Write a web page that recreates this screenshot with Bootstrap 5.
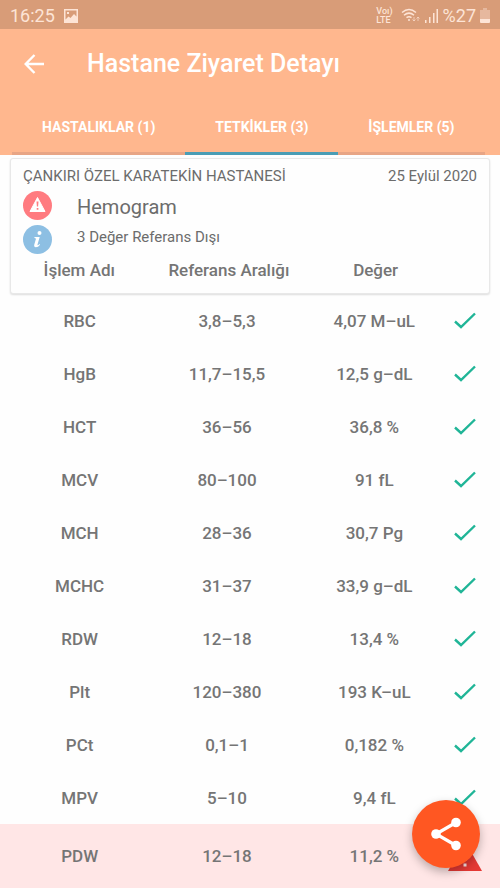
<!DOCTYPE html>
<html lang="tr">
<head>
<meta charset="utf-8">
<meta name="viewport" content="width=device-width, initial-scale=1">
<title>Hastane Ziyaret Detayı</title>
<link href="https://cdn.jsdelivr.net/npm/bootstrap@5.3.0/dist/css/bootstrap.min.css" rel="stylesheet">
<style>
body{font-family:Roboto,"Liberation Sans",sans-serif;font-weight:500;color:#757575;background:#fefefe}
svg{display:block;flex:none}
.status{height:29px;background:#d89c78;color:#fde4d6;font-size:18px;line-height:29px;font-weight:400;padding:2px 10px 0 10px}
.volte{font-size:9px;line-height:9px;font-weight:500}
.appbar{background:#ffb78e;color:#fff}
.titlebar{height:68px;padding:2px 0 0 20px}
.titlebar h1{font-size:25px;line-height:32px;font-weight:500;margin-left:39px}
.back{width:28px;height:28px;color:#fff}
.tabline{padding:0 12px}
.tabline .nav{height:58px}
.tabline .nav-link{font-size:14px;line-height:20px;padding:20px 30px 15px;color:#fff;font-weight:700;border-radius:0;border-bottom:3px solid #e8a585}
.tabline .nav-link.active{border-color:#4a9db5}
.visit{margin:3px 10px 0;border:1px solid #e8e8e8;border-radius:3px;box-shadow:0 1px 2px #0002;background:#fefefe;color:inherit}
.place{font-size:15px;line-height:18px;font-weight:400;padding:8px 12px 0}
.summary{padding:6px 12px 0}
.summary-line{height:34px}
.summary-line svg{margin-right:25px}
.summary h2{font-size:20px;line-height:32px;font-weight:400}
.summary p{font-size:15px;line-height:24px;font-weight:400}
.place,.summary h2,.summary p{color:#6c6c6c}
.results{table-layout:fixed;width:100%;font-size:17px;line-height:22px;text-align:center}
.results th,.results td{font-weight:500;padding:0}
.head-wrap{padding:0 40px 12px 0}
.head-wrap th:first-child{width:33%;padding-right:8px}
.body-wrap td,.body-wrap th{height:53px}
.body-wrap .edge{width:6px}
.body-wrap .mark-col{width:34px}
.body-wrap .end{width:18px}
.body-wrap .alert-row>*{height:64px;background:#ffe6e6}
.body-wrap svg{margin:auto}
.share{width:68px;height:68px;right:20px;bottom:20px;background:#ff5722;color:#fff;box-shadow:0 4px 10px #0004}
.share:hover{background:#f04a18;color:#fff}
</style>
<script src="https://cdn.jsdelivr.net/npm/bootstrap@5.3.0/dist/js/bootstrap.bundle.min.js"></script>
</head>
<body>
<svg class="d-none" aria-hidden="true">
<symbol id="tick" viewBox="0 0 22 18"><path d="M1 9.500 7 15 21 1.500" fill="none" stroke="#20b597" stroke-width="2.400"/></symbol>
</svg>
<div class="status d-flex align-items-center">
  <span>16:25</span>
  <svg class="ms-2" width="16" height="14" viewBox="0 0 16 14"><path fill="currentColor" fill-rule="evenodd" d="M1 0h14v14H1zM2.500 1.500v9l3-3 2 1.500 3.500-4 2.500 2.500v-6zM4 3h2v2H4z"/></svg>
  <span class="volte ms-auto">Voı)<br>LTE</span>
  <svg class="ms-2" width="20" height="15" viewBox="0 0 20 15" fill="none" stroke="currentColor" stroke-width="1.500"><path d="M1 4.500q7-6 14 0M3 7.200q5-4.200 10 0M5.500 9.700q2.500-2 5 0"/><circle cx="8" cy="12" r="1" fill="currentColor" stroke="none"/><path stroke-width="1" opacity=".65" d="M13 9v4m-1.500-1.500L13 13l1.500-1.500M17 13V9m-1.500 1.500L17 9l1.500 1.500"/></svg>
  <svg class="ms-1" width="14" height="14" viewBox="0 0 14 14"><path fill="currentColor" d="M0 11h1.500v3H0zM4 8h1.500v6H4zM8 4h1.500v10H8zM11.500 0H13v14h-1.500z"/></svg>
  <span class="ms-1">%27</span>
  <svg class="ms-1" width="10" height="15" viewBox="0 0 10 15"><path fill="currentColor" opacity=".4" d="M3 0h4v2h3v9H0V2h3z"/><path fill="currentColor" d="M0 11h10v3q0 1-1 1H1q-1 0-1-1z"/></svg>
</div>
<header class="appbar">
  <div class="titlebar d-flex align-items-center">
    <button type="button" class="back btn p-0 border-0 d-flex align-items-center justify-content-center" aria-label="Geri"><svg width="20" height="20" viewBox="0 0 20 20" fill="none" stroke="currentColor" stroke-width="2.400"><path d="M20 10H2M10.500 1 1.700 10l8.800 9"/></svg></button>
    <h1 class="mb-0">Hastane Ziyaret Detayı</h1>
  </div>
  <div class="tabline">
    <nav class="nav flex-nowrap text-nowrap">
      <a class="nav-link" href="#hastaliklar">HASTALIKLAR (1)</a>
      <a class="nav-link active" aria-current="page" href="#tetkikler">TETKİKLER (3)</a>
      <a class="nav-link" href="#islemler">İŞLEMLER (5)</a>
    </nav>
  </div>
</header>
<main id="tetkikler">
  <section class="card visit">
    <div class="place d-flex justify-content-between"><span>ÇANKIRI ÖZEL KARATEKİN HASTANESİ</span><span>25 Eylül 2020</span></div>
    <div class="summary">
      <div class="summary-line d-flex align-items-start">
        <svg width="29" height="29" viewBox="0 0 29 29"><circle cx="14.500" cy="14.500" r="14.500" fill="#ff7b80"/><path d="M14.500 6.500 22 20.500H7z" fill="#fff" stroke="#fff" stroke-linejoin="round"/><path d="M13.500 10.500h2l-.4 5h-1.200zM13.700 17h1.700v1.700h-1.700z" fill="#ff7b80"/></svg>
        <h2 class="mb-0">Hemogram</h2>
      </div>
      <div class="summary-line d-flex align-items-start">
        <svg width="29" height="29" viewBox="0 0 29 29"><circle cx="14.500" cy="14.500" r="14.500" fill="#8dbfe3"/><circle cx="16.500" cy="8" r="2" fill="#fff"/><path d="M11.500 12h5.200l-2.200 7.500q-.1 1 .8.600l1.200-1 .6.600q-2 2.600-4.200 2.600-2.300-.1-1.600-2.700l1.600-5.600q.1-.8-1.500-.9z" fill="#fff"/></svg>
        <p class="mb-0">3 Değer Referans Dışı</p>
      </div>
    </div>
    <div class="head-wrap">
      <table class="results"><thead><tr><th scope="col">İşlem Adı</th><th scope="col">Referans Aralığı</th><th scope="col">Değer</th></tr></thead></table>
    </div>
  </section>
  <div class="body-wrap">
    <table class="results" aria-label="Hemogram">
      <colgroup><col class="edge"><col><col><col><col class="mark-col"><col class="end"></colgroup>
      <tbody>
      <tr><td></td><th scope="row">RBC</th><td>3,8–5,3</td><td>4,07 M–uL</td><td><svg width="22" height="18"><use href="#tick"/></svg></td><td></td></tr>
      <tr><td></td><th scope="row">HgB</th><td>11,7–15,5</td><td>12,5 g–dL</td><td><svg width="22" height="18"><use href="#tick"/></svg></td><td></td></tr>
      <tr><td></td><th scope="row">HCT</th><td>36–56</td><td>36,8 %</td><td><svg width="22" height="18"><use href="#tick"/></svg></td><td></td></tr>
      <tr><td></td><th scope="row">MCV</th><td>80–100</td><td>91 fL</td><td><svg width="22" height="18"><use href="#tick"/></svg></td><td></td></tr>
      <tr><td></td><th scope="row">MCH</th><td>28–36</td><td>30,7 Pg</td><td><svg width="22" height="18"><use href="#tick"/></svg></td><td></td></tr>
      <tr><td></td><th scope="row">MCHC</th><td>31–37</td><td>33,9 g–dL</td><td><svg width="22" height="18"><use href="#tick"/></svg></td><td></td></tr>
      <tr><td></td><th scope="row">RDW</th><td>12–18</td><td>13,4 %</td><td><svg width="22" height="18"><use href="#tick"/></svg></td><td></td></tr>
      <tr><td></td><th scope="row">Plt</th><td>120–380</td><td>193 K–uL</td><td><svg width="22" height="18"><use href="#tick"/></svg></td><td></td></tr>
      <tr><td></td><th scope="row">PCt</th><td>0,1–1</td><td>0,182 %</td><td><svg width="22" height="18"><use href="#tick"/></svg></td><td></td></tr>
      <tr><td></td><th scope="row">MPV</th><td>5–10</td><td>9,4 fL</td><td><svg width="22" height="18"><use href="#tick"/></svg></td><td></td></tr>
      <tr class="alert-row"><td></td><th scope="row">PDW</th><td>12–18</td><td>11,2 %</td><td><svg width="34" height="30" viewBox="0 0 34 30"><path d="M17 0 34 30H0z" fill="#e53935"/><path d="M15.500 11h3v9h-3zM15.500 22.500h3v3h-3z" fill="#ffe6e6"/></svg></td><td></td></tr>
      </tbody>
    </table>
  </div>
</main>
<button type="button" class="share btn rounded-circle border-0 p-0 position-fixed d-flex align-items-center justify-content-center" aria-label="Paylaş"><svg width="30" height="34" viewBox="0 0 30 34"><path d="M25 5.500 5 17l20 11.500" fill="none" stroke="currentColor" stroke-width="3.200"/><g fill="currentColor"><circle cx="25" cy="5.500" r="4.800"/><circle cx="5" cy="17" r="4.800"/><circle cx="25" cy="28.500" r="4.800"/></g></svg></button>
</body>
</html>
